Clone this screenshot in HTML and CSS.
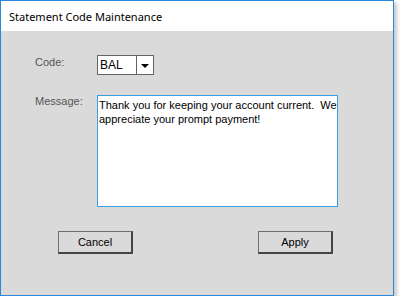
FILE: index.html
```html
<!DOCTYPE html>
<html lang="en">
<head>
    <meta charset="UTF-8">
    <meta name="viewport" content="width=device-width,initial-scale=1">
    <title>Statement Code Maintenance</title>
    <link rel="stylesheet" href="styles.css">
</head>
<body>
    <div class="window">
        <div class="titlebar">Statement Code Maintenance</div>
        <div class="content">
            <div class="row row-code">
                <label class="label" for="code">Code:</label>
                <div class="combo" id="code">
                    <span class="combo-value">BAL</span>
                    <span class="combo-btn"><span class="arrow"></span></span>
                </div>
            </div>
            <div class="row row-message">
                <label class="label" for="message">Message:</label>
                <textarea class="message" id="message" readonly>Thank you for keeping your account current.  We
appreciate your prompt payment!</textarea>
            </div>
            <div class="buttons">
                <button class="btn">Cancel</button>
                <button class="btn">Apply</button>
            </div>
        </div>
    </div>
</body>
</html>
```

FILE: styles.css
```css
body {
    margin: 0;
    padding: 0;
    background: #fff;
    font-family: "Liberation Sans", Arial, sans-serif;
}
.window {
    width: 392px;
    height: 294px;
    border: 1px solid #2b87d7;
    background: #dadada;
    box-shadow: 3px 3px 4px rgba(0,0,0,0.22);
}
.titlebar {
    height: 30px;
    background: #fff;
    padding-left: 8px;
    font-family: "Noto Sans", sans-serif;
    font-size: 11px;
    line-height: 31px;
    color: #000;
}
.content {
    padding: 24px 0 0 34px;
}
.row {
    display: flex;
    align-items: flex-start;
}
.row-message {
    margin-top: 20px;
}
.label {
    width: 62px;
    font-size: 11px;
    color: #555;
}
.row-code .label {
    padding-top: 1px;
}
.combo {
    display: flex;
    width: 55px;
    height: 18px;
    border: 1px solid #646464;
    background: #fff;
}
.combo-value {
    flex: 1;
    padding-left: 2px;
    font-size: 12px;
    line-height: 19px;
    color: #000;
}
.combo-btn {
    width: 16px;
    border-left: 1px solid #646464;
    display: flex;
    align-items: center;
    justify-content: center;
}
.arrow {
    width: 0;
    height: 0;
    border-left: 4px solid transparent;
    border-right: 4px solid transparent;
    border-top: 4px solid #000;
    margin-top: 1px;
}
.message {
    box-sizing: border-box;
    width: 241px;
    height: 112px;
    margin: 0;
    padding: 2px 1px;
    border: 1px solid #3a9fe2;
    background: #fff;
    font-family: "Liberation Sans", Arial, sans-serif;
    font-size: 11px;
    line-height: 14px;
    color: #000;
    white-space: pre;
    resize: none;
    outline: none;
    overflow: hidden;
}
.buttons {
    display: flex;
    gap: 125px;
    margin-top: 24px;
    padding-left: 23px;
}
.btn {
    width: 75px;
    height: 23px;
    padding: 0;
    background: #dadada;
    border: 1px solid #6f6f6f;
    border-right: 2px solid #454545;
    border-bottom: 2px solid #454545;
    font-family: "Liberation Sans", Arial, sans-serif;
    font-size: 11px;
    color: #000;
}
```
